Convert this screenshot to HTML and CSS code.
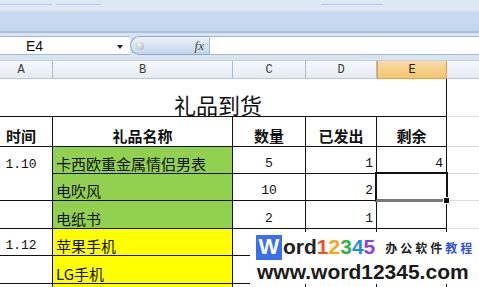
FILE: index.html
```html
<!DOCTYPE html>
<html lang="zh">
<head>
    <meta charset="UTF-8">
    <title>礼品到货</title>
    <link rel="stylesheet" href="styles.css">
</head>
<body>
    <div class="app">
        <div class="ribbon">
            <div class="tabs">
                <span class="tab t1"></span>
                <span class="tab t2"></span>
                <span class="tab t3"></span>
            </div>
        </div>
        <div class="formula-bar">
            <div class="name-box">
                <span class="name">E4</span>
                <span class="caret"></span>
            </div>
            <div class="fx-btn">
                <span class="knob"></span>
                <span class="fx">fx</span>
            </div>
            <div class="formula-input"></div>
        </div>

        <div class="sheet">
            <div class="row col-heads">
                <div class="ch">A</div>
                <div class="ch">B</div>
                <div class="ch">C</div>
                <div class="ch">D</div>
                <div class="ch active">E</div>
                <div class="ch last">F</div>
            </div>
            <div class="row title-row">
                <div class="cell title">礼品到货</div>
                <div class="cell f"></div>
            </div>
            <div class="row head-row">
                <div class="cell center">时间</div>
                <div class="cell center">礼品名称</div>
                <div class="cell center">数量</div>
                <div class="cell center">已发出</div>
                <div class="cell center">剩余</div>
                <div class="cell f"></div>
            </div>
            <div class="row">
                <div class="cell num center no-b">1.10</div>
                <div class="cell green">卡西欧重金属情侣男表</div>
                <div class="cell num center">5</div>
                <div class="cell num right">1</div>
                <div class="cell num right">4</div>
                <div class="cell f"></div>
            </div>
            <div class="row">
                <div class="cell num center"></div>
                <div class="cell green">电吹风</div>
                <div class="cell num center">10</div>
                <div class="cell num right">2</div>
                <div class="cell sel"></div>
                <div class="cell f"></div>
            </div>
            <div class="row tall">
                <div class="cell num center"></div>
                <div class="cell green">电纸书</div>
                <div class="cell num center">2</div>
                <div class="cell num right">1</div>
                <div class="cell"></div>
                <div class="cell f"></div>
            </div>
            <div class="row">
                <div class="cell num center">1.12</div>
                <div class="cell yellow">苹果手机</div>
                <div class="cell num center"></div>
                <div class="cell num right"></div>
                <div class="cell"></div>
                <div class="cell f"></div>
            </div>
            <div class="row tall">
                <div class="cell num center"></div>
                <div class="cell yellow">LG手机</div>
                <div class="cell num center"></div>
                <div class="cell num right"></div>
                <div class="cell"></div>
                <div class="cell f"></div>
            </div>
            <div class="row">
                <div class="cell num center"></div>
                <div class="cell yellow"></div>
                <div class="cell num center"></div>
                <div class="cell num right"></div>
                <div class="cell"></div>
                <div class="cell f"></div>
            </div>
        </div>

        <div class="watermark">
            <div class="wm-logo">
                <span class="wm-w">W</span><span class="wm-ord">ord</span><span class="d1">1</span><span class="d2">2</span><span class="d3">3</span><span class="d4">4</span><span class="d5">5</span>
                <span class="wm-tag">办公软件<span class="wm-blue">教程</span></span>
            </div>
            <div class="wm-url">www.word12345.com</div>
        </div>
    </div>
</body>
</html>
```

FILE: styles.css
```css
body {
    margin: 0;
    padding: 0;
    background-color: #fff;
    font-family: "Noto Sans CJK SC", sans-serif;
    overflow: hidden;
}
.app {
    width: 479px;
    height: 287px;
    position: relative;
    overflow: hidden;
}

/* ribbon + formula bar */
.ribbon {
    height: 31px;
    background: linear-gradient(#dde8f5 0, #dde8f5 11px, #c9dbf1 12px, #c3d7ef 31px);
    border-bottom: 2px solid #a9c1de;
}
.tabs {
    display: flex;
    height: 5px;
}
.tab {
    display: block;
    border-bottom: 1px solid #b8cbe4;
}
.t1 { width: 52px; }
.t2 { width: 45px; margin-left: 4px; }
.t3 { width: 62px; margin-left: 220px; }
.formula-bar {
    display: flex;
    background-color: #d9e4f2;
    padding: 3px 0 5px;
}
.name-box {
    width: 130px;
    height: 17px;
    background-color: #fff;
    border-top: 1px solid #a3b9d6;
    border-bottom: 1px solid #a3b9d6;
    display: flex;
    align-items: center;
    position: relative;
}
.name {
    font-family: "Liberation Sans", sans-serif;
    font-size: 14px;
    color: #111;
    margin-left: 26px;
}
.caret {
    position: absolute;
    left: 117px;
    top: 8px;
    border-left: 3px solid transparent;
    border-right: 3px solid transparent;
    border-top: 4px solid #222;
}
.fx-btn {
    width: 78px;
    height: 17px;
    border: 1px solid #8fa9cc;
    border-right-color: #a3b9d6;
    border-radius: 10px 0 0 10px;
    background: linear-gradient(#eef3fa, #d3e0f0 60%, #c3d4eb);
    display: flex;
    align-items: center;
    justify-content: space-between;
}
.knob {
    width: 8px;
    height: 8px;
    border-radius: 50%;
    margin-left: 5px;
    background: radial-gradient(circle at 40% 35%, #f4f4f4, #a9adb3);
}
.fx {
    font-family: "Liberation Serif", serif;
    font-style: italic;
    font-size: 13px;
    color: #444;
    margin-right: 5px;
}
.formula-input {
    flex: 1;
    height: 17px;
    background-color: #fff;
    border-top: 1px solid #a3b9d6;
    border-bottom: 1px solid #a3b9d6;
}

/* sheet grid */
.sheet {
    margin-left: -10px;
}
.row {
    display: grid;
    grid-template-columns: 63px 180px 73px 71px 70px 72px;
    height: 27px;
}
.row.tall {
    height: 28px;
}
.col-heads {
    height: 18px;
    border-top: 1px solid #c2d2e6;
}
.ch {
    background: linear-gradient(#f6f8fc, #e4ebf5);
    border-right: 1px solid #a7bdd6;
    border-bottom: 1px solid #b7c8dc;
    font-family: "Liberation Mono", monospace;
    font-size: 12px;
    color: #3c3c3c;
    display: flex;
    align-items: center;
    justify-content: center;
    box-sizing: border-box;
}
.ch.active {
    background: linear-gradient(#f9dba6, #f2c671);
    border: 1px solid #f29b3c;
    border-top: none;
    color: #222;
}
.ch.last {
    border-right: none;
}
.cell {
    border-right: 1px solid #111;
    border-bottom: 1px solid #111;
    box-sizing: border-box;
    display: flex;
    align-items: flex-end;
    padding: 0 3px 2px;
    font-size: 15px;
    line-height: 1;
    color: #111;
    white-space: nowrap;
}
.cell.f {
    border-right: none;
    border-bottom: 1px solid #dadee4;
}
.cell.no-b {
    border-bottom: none;
}
.title-row {
    height: 38px;
}
.cell.title {
    grid-column: 1 / 6;
    justify-content: center;
    font-size: 22px;
    padding-bottom: 1px;
}
.head-row {
    height: 30px;
}
.head-row .cell {
    font-weight: bold;
    padding-bottom: 3px;
}
.center {
    justify-content: center;
}
.right {
    justify-content: flex-end;
}
.num {
    font-family: "Liberation Mono", monospace;
    font-size: 13px;
    padding-bottom: 3px;
}
.green {
    background-color: #92d050;
}
.yellow {
    background-color: #ffff00;
}
.sel {
    position: relative;
}
.sel::before {
    content: "";
    position: absolute;
    left: -2px;
    top: -2px;
    right: -2px;
    bottom: -2px;
    border: 2px solid #111;
    border-bottom: 3px solid #7a7a7a;
}
.sel::after {
    content: "";
    position: absolute;
    right: -4px;
    bottom: -4px;
    width: 5px;
    height: 5px;
    background-color: #111;
    border: 1px solid #fff;
}

/* watermark */
.watermark {
    position: absolute;
    left: 250px;
    top: 232px;
    width: 229px;
    height: 52px;
    background-color: #fff;
}
.wm-logo {
    display: flex;
    align-items: center;
    height: 26px;
    margin-top: 2px;
    margin-left: 6px;
    font-family: "Liberation Sans", sans-serif;
    font-weight: bold;
    font-size: 21px;
}
.wm-w {
    background-color: #3a6ff0;
    color: #fff;
    width: 26px;
    height: 25px;
    display: flex;
    align-items: center;
    justify-content: center;
    font-size: 22px;
}
.wm-ord { color: #222; margin-left: 1px; }
.d1 { color: #f0502a; }
.d2 { color: #f7a51f; }
.d3 { color: #2fb24b; }
.d4 { color: #1e8ce6; }
.d5 { color: #8d3fe0; }
.wm-tag {
    font-family: "Noto Sans CJK SC", sans-serif;
    font-size: 12px;
    letter-spacing: 3px;
    color: #222;
    margin-left: 10px;
}
.wm-blue {
    color: #3555d0;
}
.wm-url {
    font-family: "Liberation Sans", sans-serif;
    font-weight: bold;
    font-size: 21px;
    color: #1a1a1a;
    margin-left: 7px;
    line-height: 22px;
    margin-top: 1px;
}
```
